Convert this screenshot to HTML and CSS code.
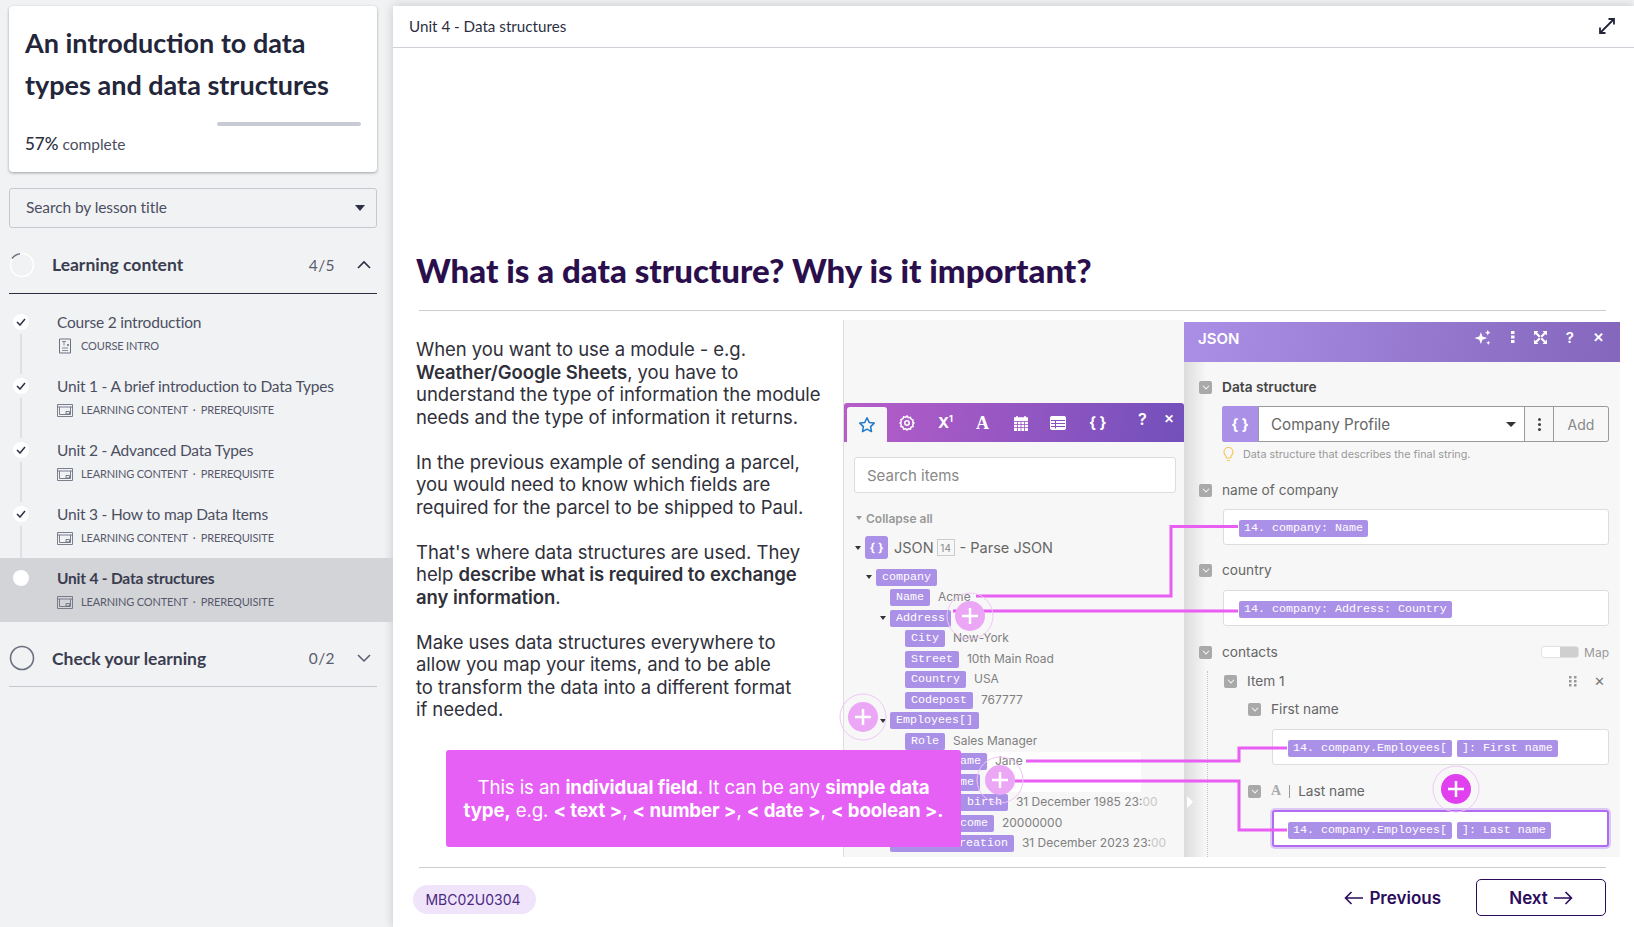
FILE: index.html
```html
<!DOCTYPE html>
<html lang="en">
<head>
  <meta charset="UTF-8" />
  <meta name="viewport" content="width=device-width, initial-scale=1.0" />
  <title>What is a data structure?</title>
  <link rel="stylesheet" href="styles.css">
</head>
<body>
  <aside class="sidebar">
    <div class="course-card">
      <h2>An introduction to data types and data structures</h2>
      <div class="progress"><span></span></div>
      <p class="percent"><b>57%</b> complete</p>
    </div>
    <div class="lesson-search">
      <span>Search by lesson title</span>
      <i class="caret-big"></i>
    </div>

    <div class="section open">
      <svg class="ring" width="26" height="26" viewBox="0 0 26 26"><circle cx="13" cy="13" r="11.5" fill="none" stroke="#fff" stroke-width="1.5"/><path d="M3 6.5A11.5 11.5 0 0 1 11 1.7" fill="none" stroke="#6d7081" stroke-width="1.5"/></svg>
      <span class="section-title">Learning content</span>
      <span class="count">4/5</span>
      <svg class="chev" width="16" height="10" viewBox="0 0 16 10"><path d="M2 8l6-6 6 6" fill="none" stroke="#2c2f42" stroke-width="1.6"/></svg>
    </div>

    <ul class="lessons">
      <li class="lesson">
        <span class="dot"><svg width="10" height="8" viewBox="0 0 10 8"><path d="M1 4l3 3 5-6" fill="none" stroke="#2c2f42" stroke-width="1.5"/></svg></span>
        <div class="lesson-title">Course 2 introduction</div>
        <div class="lesson-meta">
          <svg class="meta-doc" width="16" height="16" viewBox="0 0 14 16"><path d="M1.5 1h11v14h-11z" fill="none" stroke="#6d7081"/><path d="M4 3.5h4M6 3.5v4M9 6l2 2M11 6l-2 2M4 10h6M4 12.500h6" stroke="#6d7081" fill="none" stroke-width=".8"/></svg>
          COURSE INTRO
        </div>
      </li>
      <li class="lesson">
        <span class="dot"><svg width="10" height="8" viewBox="0 0 10 8"><path d="M1 4l3 3 5-6" fill="none" stroke="#2c2f42" stroke-width="1.5"/></svg></span>
        <div class="lesson-title">Unit 1 - A brief introduction to Data Types</div>
        <div class="lesson-meta">
          <svg class="meta-icon" width="16" height="13" viewBox="0 0 16 13"><path d="M.5.500h15v12H.5zM.5 3h15M2.500 3v7.500h11V3" fill="none" stroke="#6d7081" stroke-width=".9"/><path d="M9 7.500h3.500V10H9z" fill="none" stroke="#6d7081" stroke-width=".9"/></svg>
          LEARNING CONTENT &nbsp;·&nbsp; PREREQUISITE
        </div>
      </li>
      <li class="lesson">
        <span class="dot"><svg width="10" height="8" viewBox="0 0 10 8"><path d="M1 4l3 3 5-6" fill="none" stroke="#2c2f42" stroke-width="1.5"/></svg></span>
        <div class="lesson-title">Unit 2 - Advanced Data Types</div>
        <div class="lesson-meta">
          <svg class="meta-icon" width="16" height="13" viewBox="0 0 16 13"><path d="M.5.500h15v12H.5zM.5 3h15M2.500 3v7.500h11V3" fill="none" stroke="#6d7081" stroke-width=".9"/><path d="M9 7.500h3.500V10H9z" fill="none" stroke="#6d7081" stroke-width=".9"/></svg>
          LEARNING CONTENT &nbsp;·&nbsp; PREREQUISITE
        </div>
      </li>
      <li class="lesson">
        <span class="dot"><svg width="10" height="8" viewBox="0 0 10 8"><path d="M1 4l3 3 5-6" fill="none" stroke="#2c2f42" stroke-width="1.5"/></svg></span>
        <div class="lesson-title">Unit 3 - How to map Data Items</div>
        <div class="lesson-meta">
          <svg class="meta-icon" width="16" height="13" viewBox="0 0 16 13"><path d="M.5.500h15v12H.5zM.5 3h15M2.500 3v7.500h11V3" fill="none" stroke="#6d7081" stroke-width=".9"/><path d="M9 7.500h3.500V10H9z" fill="none" stroke="#6d7081" stroke-width=".9"/></svg>
          LEARNING CONTENT &nbsp;·&nbsp; PREREQUISITE
        </div>
      </li>
      <li class="lesson current">
        <span class="dot"></span>
        <div class="lesson-title">Unit 4 - Data structures</div>
        <div class="lesson-meta">
          <svg class="meta-icon" width="16" height="13" viewBox="0 0 16 13"><path d="M.5.500h15v12H.5zM.5 3h15M2.500 3v7.500h11V3" fill="none" stroke="#6d7081" stroke-width=".9"/><path d="M9 7.500h3.500V10H9z" fill="none" stroke="#6d7081" stroke-width=".9"/></svg>
          LEARNING CONTENT &nbsp;·&nbsp; PREREQUISITE
        </div>
      </li>
    </ul>

    <div class="section closed">
      <svg class="ring" width="26" height="26" viewBox="0 0 26 26"><circle cx="13" cy="13" r="11.500" fill="none" stroke="#6d7081" stroke-width="1.6"/></svg>
      <span class="section-title">Check your learning</span>
      <span class="count">0/2</span>
      <svg class="chev" width="16" height="10" viewBox="0 0 16 10"><path d="M2 2l6 6 6-6" fill="none" stroke="#565a6c" stroke-width="1.5"/></svg>
    </div>
  </aside>

  <main class="main">
    <header class="topbar">
      <span>Unit 4 - Data structures</span>
      <svg width="18" height="18" viewBox="0 0 18 18"><path d="M2 16L16 2M10.500 2H16v5.500M2 10.500V16h5.500" fill="none" stroke="#23263a" stroke-width="1.800"/></svg>
    </header>

    <h1 class="lesson-heading">What is a data structure? Why is it important?</h1>
    <hr class="rule rule-top">

    <div class="lesson-body">
      <div class="copy">
        <p>When you want to use a module - e.g.<br><b>Weather/Google Sheets</b>, you have to<br>understand the type of information the module<br>needs and the type of information it returns.</p>
        <p>In the previous example of sending a parcel,<br>you would need to know which fields are<br>required for the parcel to be shipped to Paul.</p>
        <p>That's where data structures are used. They<br>help <b>describe what is required to exchange<br>any information</b>.</p>
        <p>Make uses data structures everywhere to<br>allow you map your items, and to be able<br>to transform the data into a different format<br>if needed.</p>
      </div>

      <div class="picture">
        <section class="mapper">
          <div class="glare"></div>
          <div class="mapper-bar">
            <span class="mapper-tab"><svg width="18" height="18" viewBox="0 0 18 18"><path d="M9 1.800l2.200 4.600 5 .7-3.600 3.500.9 5L9 13.200l-4.500 2.400.9-5L1.800 7.100l5-.7z" fill="none" stroke="#1f78c8" stroke-width="1.500" stroke-linejoin="round"/></svg></span>
            <svg class="bar-icon gear" width="16" height="16" viewBox="0 0 16 16"><path d="M8 1l1.300 1.700 2.100-.4.700 2 2 .8-.4 2.100L15 8l-1.300 1.300.4 2.100-2 .7-.7 2-2.100-.4L8 15l-1.300-1.300-2.100.4-.7-2-2-.7.4-2.100L1 8l1.300-1.300-.4-2.100 2-.8.7-2 2.100.4z" fill="none" stroke="#fff" stroke-width="1.500"/><circle cx="8" cy="8" r="2.200" fill="none" stroke="#fff" stroke-width="1.500"/></svg>
            <span class="bar-text x1">X<sup>1</sup></span>
            <span class="bar-text serif">A</span>
            <svg class="bar-icon cal" width="14" height="16" viewBox="0 0 14 16"><path d="M0 3h14v13H0zM3 1v3M11 1v3" fill="#fff" stroke="#fff" stroke-width="1.500"/><path d="M0 6.500h14M0 9.500h14M0 12.500h14M3.500 6v10M7 6v10M10.500 6v10" stroke="#9a52c4" stroke-width=".8"/></svg>
            <svg class="bar-icon table" width="16" height="14" viewBox="0 0 16 14"><rect width="16" height="14" rx="2" fill="#fff"/><path d="M1 4.500h14M1 7.500h14M1 10.500h14M5.500 4.500v8" stroke="#8b50c0" stroke-width="1"/></svg>
            <span class="bar-text braces">{ }</span>
            <span class="bar-text help">?</span>
            <span class="bar-text close">✕</span>
          </div>
          <div class="item-search">Search items</div>
          <div class="collapse"><i class="caret grey"></i>Collapse all</div>
          <div class="json-row">
            <i class="caret"></i>
            <span class="json-icon">{ }</span>
            <span>JSON</span>
            <span class="module-no">14</span>
            <span>- Parse JSON</span>
          </div>
          <ul class="tree">
            <li class="l0"><i class="caret"></i><span class="chip">company</span></li>
            <li class="l1"><span class="chip">Name</span><span class="val">Acme</span></li>
            <li class="l1"><i class="caret"></i><span class="chip">Address</span></li>
            <li class="l2"><span class="chip">City</span><span class="val">New-York</span></li>
            <li class="l2"><span class="chip">Street</span><span class="val">10th Main Road</span></li>
            <li class="l2"><span class="chip">Country</span><span class="val">USA</span></li>
            <li class="l2"><span class="chip">Codepost</span><span class="val">767777</span></li>
            <li class="l1"><i class="caret"></i><span class="chip">Employees[]</span></li>
            <li class="l2"><span class="chip">Role</span><span class="val">Sales Manager</span></li>
            <li class="l2"><span class="chip">First name</span><span class="val">Jane</span></li>
            <li class="l2"><span class="chip">Last name</span></li>
            <li class="l2"><span class="chip">Date of birth</span><span class="val">31 December 1985 23:<em>00</em></span></li>
            <li class="l2"><span class="chip">Base income</span><span class="val">20000000</span></li>
            <li class="l1"><span class="chip">Date of creation</span><span class="val">31 December 2023 23:<em>00</em></span></li>
          </ul>
        </section>

        <section class="module">
          <div class="module-head">
            <span>JSON</span>
            <div class="head-icons">
              <svg width="18" height="17" viewBox="0 0 16 16"><path d="M6 3l1.500 4L12 8.500 7.500 10 6 14l-1.500-4L0 8.500 4.500 7zM12.500 1l.8 1.700L15 3.500l-1.700.8-.8 1.700-.8-1.700L10 3.500l1.700-.8zM13 11l.6 1.400 1.400.6-1.400.6L13 15l-.6-1.400-1.400-.6 1.400-.6z" fill="#fff"/></svg>
              <svg width="4" height="12" viewBox="0 0 4 12"><path d="M0 0h3.500v3H0zM0 4.500h3.500v3H0zM0 9h3.500v3H0z" fill="#fff"/></svg>
              <svg width="13" height="13" viewBox="0 0 13 13"><path d="M0 0h4.500L3 1.500 6.500 5 5 6.500 1.500 3 0 4.500zM13 0v4.500L11.500 3 8 6.500 6.500 5 10 1.500 8.500 0zM0 13V8.500L1.500 10 5 6.500 6.500 8 3 11.500 4.500 13zM13 13H8.500l1.500-1.500L6.500 8 8 6.500l3.500 3.500L13 8.500z" fill="#fff"/></svg>
              <span class="head-q">?</span>
              <span class="head-x">✕</span>
            </div>
          </div>
          <div class="form">
            <div class="field first"><i class="check"></i><b>Data structure</b></div>
            <div class="select-row">
              <span class="select-icon">{ }</span>
              <span class="select-value">Company Profile<i class="caret wide"></i></span>
              <span class="select-kebab"></span>
              <span class="select-add">Add</span>
            </div>
            <div class="hint">
              <svg width="11" height="15" viewBox="0 0 11 15"><path d="M3.500 11C3 8.500 1 7.500 1 5a4.500 4.500 0 0 1 9 0c0 2.500-2 3.500-2.500 6zM4 13.500h3" fill="none" stroke="#f4c75a" stroke-width="1.200"/></svg>
              Data structure that describes the final string.
            </div>
            <div class="field named"><i class="check"></i>name of company</div>
            <div class="input m9"><span class="chip">14. company: Name</span></div>
            <div class="field country"><i class="check"></i>country</div>
            <div class="input m10 second"><span class="chip">14. company: Address: Country</span></div>
            <div class="field contacts"><i class="check"></i>contacts
              <span class="map"><i class="toggle"></i>Map</span>
            </div>
            <div class="items">
              <div class="field item"><i class="check"></i>Item 1
                <span class="item-tools">
                  <svg width="8" height="11" viewBox="0 0 8 11"><path d="M0 0h2.500v2.500H0zM5 0h2.500v2.500H5zM0 4h2.500v2.500H0zM5 4h2.500v2.500H5zM0 8h2.500v2.500H0zM5 8h2.500v2.500H5z" fill="#999"/></svg>
                  <span>✕</span>
                </span>
              </div>
              <div class="sub">
                <div class="field sub-first"><i class="check"></i>First name</div>
                <div class="input m10 in-sub"><span class="chip">14. company.Employees[</span><span class="chip">]: First name</span></div>
                <div class="field sub-last"><i class="check"></i><span class="type-a">A</span><span class="type-sep"></span>Last name</div>
                <div class="input focus in-sub"><span class="chip">14. company.Employees[</span><span class="chip">]: Last name</span></div>
              </div>
            </div>
          </div>
        </section>

        <svg class="wires" width="777" height="537" viewBox="843 320 777 537">
          <g fill="none" stroke="#ea5ff3" stroke-width="3">
            <path d="M976 596H1171V526.500H1238"/>
            <path d="M953 611H1238"/>
            <path d="M1026 761H1239V748H1287"/>
            <path d="M1015 781H1239V830H1287"/>
          </g>
          <g stroke="#f0c6f7" fill="none"><circle cx="970" cy="616" r="23"/><circle cx="863" cy="717" r="23"/><circle cx="1000" cy="780" r="23"/><circle cx="1456" cy="789" r="23"/></g>
          <g fill="#eba7f5"><circle cx="970" cy="616" r="15"/><circle cx="863" cy="717" r="15"/><circle cx="1000" cy="780" r="15"/></g>
          <circle cx="1456" cy="789" r="15" fill="#e040ee"/>
          <path d="M970 608v16M962 616h16M863 709v16M855 717h16M1000 772v16M992 780h16M1456 781v16M1448 789h16" stroke="#fff" stroke-width="2.500"/>
          <path d="M1187 796l6 6-6 6z" fill="#fff"/>
        </svg>

        <div class="callout">This is an <b>individual field</b>. It can be any <b>simple data<br>type,</b> e.g. <b>&lt; text &gt;</b>, <b>&lt; number &gt;</b>, <b>&lt; date &gt;</b>, <b>&lt; boolean &gt;.</b></div>
      </div>
    </div>

    <hr class="rule rule-bottom">

    <footer class="pager">
      <span class="code">MBC02U0304</span>
      <a class="prev">
        <svg width="20" height="14" viewBox="0 0 20 14"><path d="M19 7H1.500M7.500 1l-6 6 6 6" fill="none" stroke="#2b0b5c" stroke-width="1.600"/></svg>
        Previous
      </a>
      <a class="next">
        Next
        <svg width="20" height="14" viewBox="0 0 20 14"><path d="M1 7h17.500M12.500 1l6 6-6 6" fill="none" stroke="#2b0b5c" stroke-width="1.600"/></svg>
      </a>
    </footer>
  </main>
</body>
</html>
```

FILE: styles.css
```css
* {
  box-sizing: border-box;
}
html, body {
  height: 927px;
  overflow: hidden;
}
body {
  margin: 0;
  display: flex;
  background: #f1f2f4;
  font-family: Lato, "Noto Sans", sans-serif;
  color: #2c2f42;
}

/* sidebar */
.sidebar {
  width: 393px;
  flex: none;
  padding-top: 6px;
}
.course-card {
  margin: 0 16px 0 9px;
  height: 166px;
  padding: 16px 16px 0;
  background: white;
  border-radius: 4px;
  box-shadow: 0 1px 3px rgba(0,0,0,0.35);
}
.course-card h2 {
  margin: 0;
  font-size: 27px;
  line-height: 42px;
  font-weight: 700;
  color: #23263a;
}
.progress {
  height: 4px;
  margin: 16px 0 0;
  display: flex;
  justify-content: flex-end;
}
.progress span {
  width: 144px;
  background: #c8cad6;
  border-radius: 2px;
}
.percent {
  margin: 7px 0 0;
  font-size: 15.500px;
  color: #4c4f62;
}
.percent b {
  font-weight: 500;
  font-size: 17px;
  color: #2c2f42;
}
.lesson-search {
  margin: 16px 16px 0 9px;
  height: 40px;
  padding: 0 11px 3px 16px;
  border: 1px solid #c6c8d0;
  border-radius: 3px;
  display: flex;
  align-items: center;
  justify-content: space-between;
  font-size: 15.500px;
  letter-spacing: -0.1px;
  color: #4c4f62;
}
.caret-big {
  border-top: 6px solid #2c2f42;
  border-left: 5px solid transparent;
  border-right: 5px solid transparent;
  margin-top: 3px;
}
.section {
  margin: 0 16px 0 9px;
  display: flex;
  align-items: center;
}
.section.open {
  height: 66px;
  padding-top: 8px;
  border-bottom: 1px solid #2c2f42;
}
.section.closed {
  height: 65px;
  padding-top: 8px;
  border-bottom: 1px solid #c6c8d0;
}
.ring {
  margin-right: 17px;
}
.section-title {
  flex: 1;
  font-size: 17.500px;
  font-weight: 700;
  color: #3a3d50;
}
.count {
  font-size: 15.500px;
  letter-spacing: 0.4px;
  color: #5a5d70;
  margin-right: 21px;
}
.chev {
  margin-right: 5px;
}
.lessons {
  list-style: none;
  margin: 8px 0 0;
  padding: 0;
}
.lesson {
  position: relative;
  height: 64px;
  padding: 10px 0 0 57px;
}
.lesson.current {
  background: #d3d4d8;
}
.lesson .dot {
  position: absolute;
  left: 13px;
  top: 12px;
  width: 16px;
  height: 16px;
  border-radius: 50%;
  background: white;
  display: flex;
  align-items: center;
  justify-content: center;
}
.lesson:not(:last-child)::after {
  content: "";
  position: absolute;
  left: 20px;
  top: 32px;
  width: 2px;
  height: 40px;
  background: #dfe0e4;
}
.lesson-title {
  font-size: 15.500px;
  line-height: 20px;
  letter-spacing: -0.2px;
  color: #4c4f62;
}
.current .lesson-title {
  font-weight: 700;
  color: #3a3d50;
}
.lesson-meta {
  margin-top: 6px;
  display: flex;
  align-items: center;
  font-size: 11px;
  line-height: 16px;
  letter-spacing: -0.15px;
  color: #565a6c;
}
.meta-doc,
.meta-icon {
  margin-right: 8px;
  flex: none;
}

/* main column */
.main {
  flex: 1;
  margin-top: 6px;
  background: white;
  box-shadow: 0 0 10px rgba(0,0,0,0.18);
  font-family: Inter, sans-serif;
  min-width: 0;
}
.topbar {
  height: 42px;
  padding: 0 18px 2px 16px;
  border-bottom: 1px solid #cfcfd8;
  display: flex;
  align-items: center;
  justify-content: space-between;
  font-family: Lato, sans-serif;
  font-size: 15.200px;
  color: #2c2f42;
}
.lesson-heading {
  margin: 202px 0 0 23px;
  font-family: Lato, sans-serif;
  font-weight: 900;
  font-size: 33px;
  line-height: 40px;
  color: #2b0f4d;
}
.rule {
  border: 0;
  height: 1px;
  background: #cfcbcf;
  margin: 0 28px 0 26px;
}
.rule-top {
  margin-top: 20px;
}
.lesson-body {
  display: flex;
  margin-top: 9px;
  height: 537px;
}
.copy {
  width: 450px;
  padding: 18px 0 0 23px;
  flex: none;
  font-size: 18.500px;
  line-height: 22.500px;
  color: #30303a;
  letter-spacing: -0.06px;
}
.copy p {
  margin: 0 0 22.500px;
}
.copy b {
  font-weight: 600;
}

/* the screenshot of the scenario editor */
.picture {
  position: relative;
  width: 777px;
  height: 537px;
  display: flex;
  font-size: 14px;
  color: #666;
}
.mapper {
  position: relative;
  width: 341px;
  flex: none;
  background: #f7f7f7;
  border-left: 1px solid #ddd;
  padding-top: 83px;
  overflow: hidden;
}
.glare {
  position: absolute;
  left: 144px;
  top: 432px;
  width: 153px;
  height: 40px;
  background: white;
}
.mapper-bar {
  height: 39px;
  position: relative;
  background: linear-gradient(100deg, #b75dc9, #7250bb);
  border-radius: 3px 3px 0 0;
  display: flex;
  align-items: center;
  color: white;
}
.mapper-tab {
  width: 40px;
  height: 35px;
  margin: 4px 0 0 3px;
  align-self: flex-start;
  background: #f7f7f7;
  border-radius: 3px 3px 0 0;
  display: flex;
  align-items: center;
  justify-content: center;
}
.bar-icon {
  position: absolute;
}
.bar-text {
  position: absolute;
  font-weight: 700;
  font-size: 15px;
}
.gear { left: 55px; top: 12px; }
.cal { left: 170px; top: 12px; }
.table { left: 206px; top: 13px; }
.x1 { left: 94px; top: 10px; }
.x1 sup { font-size: 9px; line-height: 0; }
.serif { left: 132px; top: 10px; font-family: "Liberation Serif", serif; font-size: 18px; }
.braces { left: 245px; top: 10px; }
.help { left: 294px; top: 6px; font-size: 16px; font-weight: 600; }
.close { left: 320px; top: 8px; font-size: 12px; }
.item-search {
  margin: 15px 8px 0 10px;
  height: 36px;
  padding: 0 12px;
  background: white;
  border: 1px solid #ddd;
  border-radius: 3px;
  display: flex;
  align-items: center;
  font-size: 15px;
  color: #888;
}
.caret {
  display: inline-block;
  border-top: 4px solid #333;
  border-left: 3px solid transparent;
  border-right: 3px solid transparent;
  flex: none;
}
.caret.grey {
  border-top-color: #999;
}
.collapse {
  margin: 16px 0 0 12px;
  height: 18px;
  display: flex;
  align-items: center;
  gap: 4px;
  font-size: 12px;
  font-weight: 600;
  color: #999;
}
.json-row {
  margin: 9px 0 0 11px;
  height: 23px;
  display: flex;
  align-items: center;
  font-size: 14.500px;
  color: #666;
}
.json-icon {
  width: 23px;
  height: 23px;
  margin: 0 6px 0 4px;
  border-radius: 3px;
  background: #ab90e8;
  color: white;
  font-weight: 700;
  font-size: 12px;
  display: flex;
  align-items: center;
  justify-content: center;
}
.module-no {
  width: 18px;
  height: 17px;
  margin: 0 5px 0 3px;
  border: 1px solid #ccc;
  font-size: 10px;
  display: flex;
  align-items: center;
  justify-content: center;
  color: #888;
}
.tree {
  list-style: none;
  margin: 8px 0 0;
  padding: 0;
  position: relative;
}
.tree li {
  height: 20.500px;
  display: flex;
  align-items: center;
}
.tree .l0 { padding-left: 32px; }
.tree .l1 { padding-left: 46px; }
.tree .l2 { padding-left: 61px; }
.tree .caret {
  margin-left: -10px;
  margin-right: 4px;
}
.chip {
  display: inline-block;
  height: 17px;
  line-height: 16px;
  padding: 0 6px;
  border-radius: 2px;
  background: #ab90e8;
  color: white;
  font-family: "Liberation Mono", monospace;
  font-size: 11.670px;
  white-space: nowrap;
}
.val {
  margin-left: 8px;
  margin-top: -2px;
  font-size: 12px;
  color: #808080;
  white-space: nowrap;
}
.val em {
  font-style: normal;
  color: #c8c8c8;
}

/* JSON module panel */
.module {
  flex: 1;
  margin-top: 2px;
  height: 535px;
  overflow: hidden;
  background: linear-gradient(90deg, #dcdcdc, #f7f7f7 22px);
}
.module-head {
  height: 40px;
  padding: 0 16px 8px 14px;
  background: linear-gradient(100deg, #ab8fe6, #8467bc);
  display: flex;
  align-items: center;
  justify-content: space-between;
  color: white;
  font-weight: 600;
  font-size: 15px;
}
.head-icons {
  display: flex;
  align-items: center;
  gap: 19px;
  margin-top: -2px;
}
.head-q { font-size: 15px; }
.head-x { font-size: 13px; }
.form {
  padding: 0 11px 0 15px;
  font-size: 13.700px;
  color: #666;
}
.field {
  display: flex;
  align-items: center;
  height: 20px;
  margin-top: 15px;
  position: relative;
}
.field b {
  font-weight: 600;
  color: #444;
}
.check {
  width: 13px;
  height: 13px;
  margin-right: 10px;
  flex: none;
  border-radius: 2px;
  background: #a9a9a9;
  position: relative;
}
.check::after {
  content: "";
  position: absolute;
  left: 3.500px;
  top: 2.500px;
  width: 5px;
  height: 5px;
  border-right: 1.500px solid white;
  border-bottom: 1.500px solid white;
  transform: rotate(45deg) scale(.8);
}
.select-row {
  margin: 9px 0 0 23px;
  height: 36px;
  display: flex;
  border: 1px solid #9a9a9a;
  border-left: 0;
  border-radius: 3px;
  background: white;
}
.select-icon {
  width: 37px;
  margin: -1px 0;
  background: #ab90e8;
  border-radius: 3px 0 0 3px;
  color: white;
  font-weight: 700;
  font-size: 15px;
  display: flex;
  align-items: center;
  justify-content: center;
  border-right: 1px solid #9a9a9a;
}
.select-value {
  flex: 1;
  padding: 0 8px 0 12px;
  display: flex;
  align-items: center;
  justify-content: space-between;
  font-size: 15.200px;
}
.caret.wide {
  border-top-width: 5px;
  border-left-width: 5px;
  border-right-width: 5px;
}
.select-kebab {
  width: 29px;
  background: #f7f7f7;
  border-left: 1px solid #9a9a9a;
  position: relative;
}
.select-kebab::after {
  content: "";
  position: absolute;
  left: 13px;
  top: 11px;
  width: 3px;
  height: 3px;
  border-radius: 50%;
  background: #444;
  box-shadow: 0 5px #444, 0 10px #444;
}
.select-add {
  width: 55px;
  background: #f7f7f7;
  border-left: 1px solid #9a9a9a;
  border-radius: 0 3px 3px 0;
  font-size: 14px;
  color: #888;
  display: flex;
  align-items: center;
  justify-content: center;
}
.hint {
  margin: 5px 0 0 24px;
  height: 15px;
  display: flex;
  align-items: center;
  gap: 9px;
  font-size: 10.800px;
  color: #999;
  white-space: nowrap;
}
.named { margin-top: 18px; }
.input {
  margin-left: 24px;
  height: 36px;
  padding: 10px 0 0 15px;
  display: flex;
  gap: 5px;
  background: white;
  border: 1px solid #ddd;
  border-radius: 3px;
}
.input .chip {
  padding: 0 5px;
}
.m9 { margin-top: 9px; }
.m10 { margin-top: 10px; }
.country { margin-top: 15px; }
.contacts { margin-top: 16px; }
.map {
  margin-left: auto;
  display: flex;
  align-items: center;
  gap: 5px;
  font-size: 12px;
  color: #999;
}
.toggle {
  width: 38px;
  height: 12px;
  border-radius: 3px;
  background: linear-gradient(90deg, white 50%, #cfcfcf 50%);
  border: 1px solid #e2e2e2;
}
.items {
  margin: 9px 0 0 8px;
  padding-left: 16px;
  border-left: 1px dotted #c4c4c4;
  height: 190px;
}
.field.item {
  margin-top: 0;
}
.item-tools {
  margin-left: auto;
  margin-right: 4px;
  display: flex;
  align-items: center;
  gap: 17px;
  font-size: 13px;
  color: #777;
}
.sub {
  padding-left: 24px;
}
.sub-first { margin-top: 8px; }
.sub-last { margin-top: 16px; }
.in-sub { margin-left: 24px; }
.type-a {
  font-family: "Liberation Serif", serif;
  font-weight: 700;
  color: #aaa;
  font-size: 14px;
}
.type-sep {
  width: 1px;
  height: 13px;
  background: #999;
  margin: 0 8px;
}
.input.focus {
  margin-top: 9px;
  height: 37px;
  border: 2px solid #b06bf0;
  box-shadow: 0 0 0 2px #dcc9f5;
  padding: 10px 0 0 14px;
}
.wires {
  position: absolute;
  left: 0;
  top: 0;
  overflow: visible;
  pointer-events: none;
}
.callout {
  position: absolute;
  left: -397px;
  top: 430px;
  width: 515px;
  height: 97px;
  padding: 27px 0 0;
  background: #e660f5;
  border-radius: 3px;
  color: white;
  font-size: 18.700px;
  line-height: 22.500px;
  letter-spacing: -0.12px;
  text-align: center;
}
.callout b {
  font-weight: 700;
}

/* footer */
.rule-bottom {
  margin-top: 10px;
}
.pager {
  display: flex;
  align-items: center;
  padding: 11px 28px 0 20px;
  color: #2b0b5c;
}
.code {
  width: 123px;
  height: 29px;
  padding-right: 3px;
  margin-right: auto;
  margin-top: 3px;
  border-radius: 15px;
  background: #f0e4fa;
  color: #4a2a85;
  font-size: 14px;
  display: flex;
  align-items: center;
  justify-content: center;
}
.prev,
.next {
  display: flex;
  align-items: center;
  gap: 5px;
  font-size: 17px;
  font-weight: 600;
}
.prev {
  margin-right: 35px;
}
.next {
  width: 130px;
  height: 37px;
  justify-content: center;
  border: 1.500px solid #2b0b5c;
  border-radius: 5px;
}
```
